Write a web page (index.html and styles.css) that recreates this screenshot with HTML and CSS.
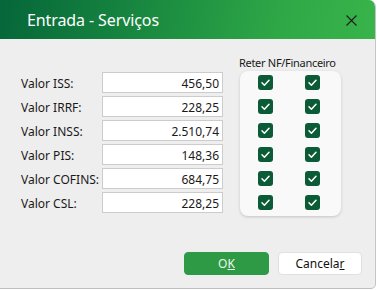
FILE: index.html
```html
<!DOCTYPE html>
<html lang="pt">
<head>
<meta charset="utf-8">
<title>Entrada - Serviços</title>
<link rel="stylesheet" href="styles.css">
</head>
<body>
<div class="dialog">
  <div class="titlebar">
    <span class="title">Entrada - Serviços</span>
    <svg class="close" width="11" height="11" viewBox="0 0 11 11"><path d="M0.5 0.5L10.5 10.5M10.5 0.5L0.5 10.5" stroke="#1b1b1b" stroke-width="1.1" fill="none"/></svg>
  </div>
  <div class="content">
    <div class="fields">
      <label class="lbl">Valor ISS:</label><div class="inp">456,50</div>
      <label class="lbl">Valor IRRF:</label><div class="inp">228,25</div>
      <label class="lbl">Valor INSS:</label><div class="inp">2.510,74</div>
      <label class="lbl">Valor PIS:</label><div class="inp">148,36</div>
      <label class="lbl">Valor COFINS:</label><div class="inp">684,75</div>
      <label class="lbl">Valor CSL:</label><div class="inp">228,25</div>
    </div>
    <div class="checks">
      <div class="checks-head">Reter NF/Financeiro</div>
      <div class="panel">
        <span class="cb"><svg viewBox="0 0 15 15"><path d="M4 7.8L6.4 10.2L11 5.2"/></svg></span>
        <span class="cb"><svg viewBox="0 0 15 15"><path d="M4 7.8L6.4 10.2L11 5.2"/></svg></span>
        <span class="cb"><svg viewBox="0 0 15 15"><path d="M4 7.8L6.4 10.2L11 5.2"/></svg></span>
        <span class="cb"><svg viewBox="0 0 15 15"><path d="M4 7.8L6.4 10.2L11 5.2"/></svg></span>
        <span class="cb"><svg viewBox="0 0 15 15"><path d="M4 7.8L6.4 10.2L11 5.2"/></svg></span>
        <span class="cb"><svg viewBox="0 0 15 15"><path d="M4 7.8L6.4 10.2L11 5.2"/></svg></span>
        <span class="cb"><svg viewBox="0 0 15 15"><path d="M4 7.8L6.4 10.2L11 5.2"/></svg></span>
        <span class="cb"><svg viewBox="0 0 15 15"><path d="M4 7.8L6.4 10.2L11 5.2"/></svg></span>
        <span class="cb"><svg viewBox="0 0 15 15"><path d="M4 7.8L6.4 10.2L11 5.2"/></svg></span>
        <span class="cb"><svg viewBox="0 0 15 15"><path d="M4 7.8L6.4 10.2L11 5.2"/></svg></span>
        <span class="cb"><svg viewBox="0 0 15 15"><path d="M4 7.8L6.4 10.2L11 5.2"/></svg></span>
        <span class="cb"><svg viewBox="0 0 15 15"><path d="M4 7.8L6.4 10.2L11 5.2"/></svg></span>
      </div>
    </div>
  </div>
  <div class="footer">
    <button class="btn btn-ok">O<u>K</u></button>
    <button class="btn btn-cancel">Cancela<u>r</u></button>
  </div>
</div>
</body>
</html>
```
FILE: styles.css
```css
html, body {
  margin: 0;
  padding: 0;
  background: #ffffff;
}
body {
  font-family: "Noto Sans", "Open Sans", sans-serif;
  font-size: 12px;
  color: #1a1a1a;
}
.dialog {
  width: 375px;
  height: 288px;
  background: #eeeeee;
  border-right: 1px solid #c4c4c4;
  border-bottom: 1px solid #bdbdbd;
  border-top-right-radius: 7px;
  border-bottom-right-radius: 5px;
  overflow: hidden;
  display: flex;
  flex-direction: column;
}
.titlebar {
  height: 39px;
  flex: none;
  background: linear-gradient(100deg, #05663a 0%, #1a8a40 40%, #2fa847 75%, #38b44a 100%);
  display: flex;
  align-items: center;
  padding: 0 18px 0 27px;
}
.title {
  color: #ffffff;
  font-size: 16px;
  flex: 1;
  letter-spacing: -0.1px;
}
.close {
  display: block;
  margin-top: 1px;
}
.content {
  display: flex;
  align-items: flex-start;
  padding: 17px 0 0 21px;
}
.fields {
  display: grid;
  grid-template-columns: 81px 121px;
  grid-auto-rows: 21px;
  row-gap: 3px;
  margin-top: 16px;
}
.lbl {
  display: flex;
  align-items: center;
  white-space: nowrap;
  padding-top: 1px;
}
.inp {
  box-sizing: border-box;
  background: #ffffff;
  border: 1px solid #cccccc;
  text-align: right;
  padding: 2px 3px 0 0;
  line-height: 17px;
}
.checks {
  margin-left: 17px;
  display: flex;
  flex-direction: column;
}
.checks-head {
  height: 15px;
  line-height: 14px;
  font-size: 11px;
  letter-spacing: -0.3px;
  white-space: nowrap;
  margin-left: -1px;
}
.panel {
  width: 101px;
  height: 145px;
  box-sizing: border-box;
  background: #f9f9f9;
  border-radius: 8px;
  box-shadow: 0 1px 3px rgba(0, 0, 0, 0.18);
  display: grid;
  grid-template-columns: 15px 15px;
  grid-auto-rows: 21px;
  column-gap: 32px;
  row-gap: 3px;
  padding: 1px 0 0 18px;
  align-items: center;
}
.cb {
  width: 15px;
  height: 15px;
  background: #0b5b36;
  border-radius: 3px;
  display: block;
}
.cb svg {
  display: block;
  width: 15px;
  height: 15px;
}
.cb path {
  fill: none;
  stroke: #ffffff;
  stroke-width: 1.5;
  stroke-linecap: round;
  stroke-linejoin: round;
}
.footer {
  margin-top: auto;
  display: flex;
  justify-content: flex-end;
  gap: 9px;
  padding: 0 13px 13px 0;
}
.btn {
  font-family: inherit;
  font-size: 12px;
  height: 23px;
  width: 84px;
  border-radius: 4px;
  padding: 0;
  margin: 0;
  line-height: 21px;
}
.btn-ok {
  width: 85px;
  background: #2e9a45;
  border: 1px solid #2e9a45;
  color: #eaf6ea;
}
.btn-cancel {
  background: #ffffff;
  border: 1px solid #e0e0e0;
  color: #111111;
}
```
